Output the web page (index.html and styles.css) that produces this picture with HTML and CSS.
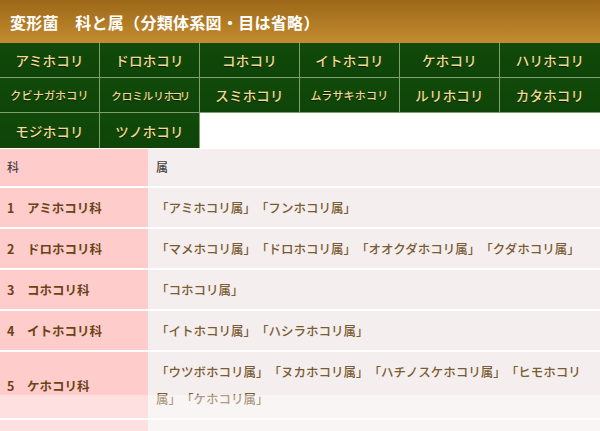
FILE: index.html
```html
<!DOCTYPE html>
<html lang="ja">
<head>
<meta charset="utf-8">
<title>変形菌 科と属</title>
<link rel="stylesheet" href="styles.css">
</head>
<body>
<header class="page-head">
  <h1 class="title">変形菌　科と属（分類体系図・目は省略）</h1>
</header>
<nav class="fam-nav">
  <a class="nav-cell">アミホコリ</a>
  <a class="nav-cell">ドロホコリ</a>
  <a class="nav-cell">コホコリ</a>
  <a class="nav-cell">イトホコリ</a>
  <a class="nav-cell">ケホコリ</a>
  <a class="nav-cell">ハリホコリ</a>
  <a class="nav-cell small">クビナガホコリ</a>
  <a class="nav-cell tiny">クロミルリ<span class="squeeze">ホコリ</span></a>
  <a class="nav-cell">スミホコリ</a>
  <a class="nav-cell small">ムラサキホコリ</a>
  <a class="nav-cell">ルリホコリ</a>
  <a class="nav-cell">カタホコリ</a>
  <a class="nav-cell">モジホコリ</a>
  <a class="nav-cell">ツノホコリ</a>
</nav>
<table class="tax-table">
  <thead>
    <tr><th class="col-fam">科</th><th class="col-gen">属</th></tr>
  </thead>
  <tbody>
    <tr><td class="col-fam">1　アミホコリ科</td><td class="col-gen">「アミホコリ属」「フンホコリ属」</td></tr>
    <tr><td class="col-fam">2　ドロホコリ科</td><td class="col-gen">「マメホコリ属」「ドロホコリ属」「オオクダホコリ属」「クダホコリ属」</td></tr>
    <tr><td class="col-fam">3　コホコリ科</td><td class="col-gen">「コホコリ属」</td></tr>
    <tr><td class="col-fam">4　イトホコリ科</td><td class="col-gen">「イトホコリ属」「ハシラホコリ属」</td></tr>
    <tr><td class="col-fam">5　ケホコリ科</td><td class="col-gen">「ウツボホコリ属」「ヌカホコリ属」「ハチノスケホコリ属」「ヒモホコリ属」「ケホコリ属」</td></tr>
    <tr><td class="col-fam">6　ハリホコリ科</td><td class="col-gen">「ハリホコリ属」</td></tr>
  </tbody>
</table>
<div class="fade"></div>
</body>
</html>
```
FILE: styles.css
```css
html, body {
  margin: 0;
  padding: 0;
  background: #ffffff;
  font-family: "Noto Sans CJK JP", "Noto Sans", sans-serif;
  text-spacing-trim: space-all;
}
.page-head {
  height: 43px;
  box-sizing: border-box;
  padding: 0 10px;
  display: flex;
  align-items: center;
  background: linear-gradient(to bottom, #9c6818 0%, #b07a24 50%, #c48c30 100%);
}
.title {
  margin: 0;
  font-size: 16px;
  font-weight: 700;
  color: #ffffff;
  letter-spacing: 0.3px;
  line-height: 1;
}
.fam-nav {
  display: grid;
  grid-template-columns: repeat(6, 100px);
  grid-auto-rows: 35px;
}
.nav-cell {
  display: flex;
  align-items: center;
  justify-content: center;
  box-sizing: border-box;
  background: linear-gradient(to bottom, #114a0a, #0e4408);
  border-right: 1px solid #7fa06c;
  border-bottom: 1px solid #7fa06c;
  color: #f2da92;
  font-size: 13.5px;
  font-weight: 500;
  letter-spacing: 0.2px;
  text-shadow: 0 1px 0 rgba(0,0,0,0.6);
  white-space: nowrap;
}
.nav-cell:nth-child(6n) {
  border-right: none;
}
.nav-cell:nth-child(n+13) {
  border-bottom: none;
}
.nav-cell.small {
  font-size: 11px;
  letter-spacing: 0.2px;
}
.nav-cell.tiny {
  font-size: 10.5px;
  letter-spacing: 0;
}
.squeeze {
  letter-spacing: -2.5px;
}
.tax-table {
  width: 600px;
  border-collapse: separate;
  border-spacing: 0 2px;
  margin-top: -1px;
  table-layout: fixed;
}
.tax-table th,
.tax-table td {
  padding: 6px 7px;
  line-height: 27px;
  font-size: 12.5px;
  text-align: left;
  vertical-align: middle;
}
.tax-table thead th {
  padding-top: 4px;
  padding-bottom: 6px;
  font-weight: 500;
  color: #4a4440;
  font-size: 12px;
}
.col-fam {
  width: 134px;
  background: #ffcccc;
}
.col-gen {
  background: #f5eeee;
  padding-left: 8px !important;
  padding-right: 12px !important;
}
.tax-table tbody .col-fam {
  color: #6b4414;
  font-weight: 700;
}
.tax-table tbody .col-gen {
  color: #7a5c32;
  font-weight: 500;
}
.fade {
  position: fixed;
  left: 0;
  right: 0;
  bottom: 0;
  height: 36px;
  background: rgba(255, 255, 255, 0.4);
  pointer-events: none;
}
```
